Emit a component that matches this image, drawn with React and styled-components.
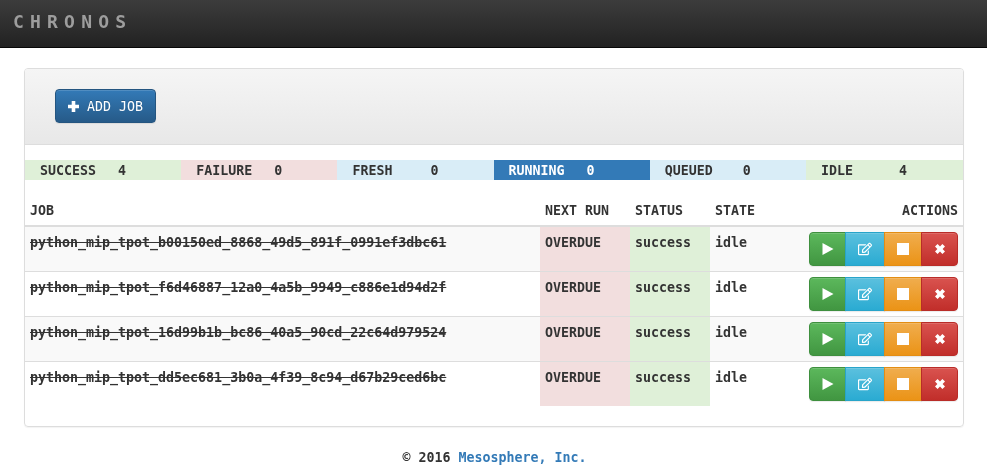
import React from "react";
import styled, { createGlobalStyle } from "styled-components";
import { FaRegEdit } from "react-icons/fa";

const Global = createGlobalStyle`
  html, body { margin: 0; padding: 0; background: #fff; }
  body { font-family: "DejaVu Sans Mono", monospace; font-size: 13.3px; line-height: 20px; color: #333; font-weight: 700; }
  #root { will-change: transform; }
  * { box-sizing: border-box; }
`;

const Navbar = styled.header`
  height: 48px;
  background: linear-gradient(to bottom, #3c3c3c 0%, #222 100%);
  border-bottom: 1px solid #080808;
  display: flex;
  align-items: center;
  padding: 0 0 3px 13px;
`;
const Brand = styled.div`
  font-size: 18px;
  letter-spacing: 6.2px;
  color: #9d9d9d;
  font-weight: 700;
`;
const Panel = styled.main`
  margin: 20px 23px 0 24px;
  height: 359px;
  border: 1px solid #ddd;
  border-radius: 4px;
  overflow: hidden;
  box-shadow: 0 1px 1px rgba(0, 0, 0, 0.05);
`;
const PanelHead = styled.div`
  height: 76px;
  padding: 20px 30px;
  background: linear-gradient(to bottom, #f5f5f5 0%, #e8e8e8 100%);
  border-bottom: 1px solid #ddd;
`;
const AddButton = styled.button`
  display: inline-flex;
  align-items: center;
  gap: 8px;
  height: 34px;
  width: 101px;
  padding: 0 0 0 12px;
  font: 400 13.3px "DejaVu Sans Mono", monospace;
  color: #fff;
  border: 1px solid #245580;
  border-radius: 4px;
  background: linear-gradient(to bottom, #337ab7 0%, #265a88 100%);
  text-shadow: 0 -1px 0 rgba(0, 0, 0, 0.2);
  box-shadow: inset 0 1px 0 rgba(255, 255, 255, 0.15), 0 1px 1px rgba(0, 0, 0, 0.075);
`;
const Counters = styled.div`
  display: grid;
  grid-template-columns: repeat(5, 156.2px) 1fr;
  margin-top: 15px;
`;
const Counter = styled.div`
  display: flex;
  height: 20px;
  padding: 1px 0 0 15px;
  background: ${(p) => p.$bg};
  color: ${(p) => p.$fg || "#333"};
`;
const CounterLabel = styled.span`
  width: 78px;
`;
const Table = styled.table`
  width: 100%;
  margin-top: 15px;
  border-collapse: collapse;
  table-layout: fixed;
`;
const Th = styled.th`
  height: 31px;
  padding: 5px 5px 4px;
  text-align: ${(p) => p.$right ? "right" : "left"};
  width: ${(p) => p.$w};
  font-weight: 700;
  border-bottom: 2px solid #ddd;
  vertical-align: bottom;
`;
const Tr = styled.tr`
  background: ${(p) => p.$odd ? "#f9f9f9" : "#fff"};
  &:last-child td { height: 44.5px; }
`;
const Td = styled.td`
  height: 45px;
  padding: 6px 5px 4px;
  vertical-align: top;
  border-top: 1px solid #ddd;
  background: ${(p) => p.$bg || "transparent"};
  text-align: ${(p) => p.$right ? "right" : "left"};
`;
const JobName = styled.span`
  text-decoration: line-through;
  white-space: nowrap;
`;
const Group = styled.div`
  display: inline-flex;
  vertical-align: top;
  margin-top: -1px;
`;
const ActionButton = styled.button`
  width: ${(p) => p.$w}px;
  height: 34px;
  padding: 0;
  display: flex;
  align-items: center;
  justify-content: center;
  color: #fff;
  margin-left: ${(p) => p.$first ? 0 : -1}px;
  border: 1px solid ${(p) => p.$border};
  border-radius: ${(p) => p.$first ? "4px 0 0 4px" : p.$last ? "0 4px 4px 0" : "0"};
  background: linear-gradient(to bottom, ${(p) => p.$from} 0%, ${(p) => p.$to} 100%);
  box-shadow: inset 0 1px 0 rgba(255, 255, 255, 0.15), 0 1px 1px rgba(0, 0, 0, 0.075);
`;
const Footer = styled.footer`
  margin-top: 21px;
  text-align: center;
  padding-left: 2px;
`;
const FootLink = styled.a`
  color: #337ab7;
  text-decoration: none;
`;

const PlusIcon = () => (
  <svg width="11" height="11" viewBox="0 0 11 11" fill="currentColor"><path d="M3.7 0h3.6v3.7H11v3.6H7.3V11H3.7V7.3H0V3.7h3.7z" /></svg>
);
const PlayIcon = () => (
  <svg width="12" height="12" viewBox="0 0 12 12" fill="currentColor"><path d="M0.5 0L11.5 6 0.5 12z" /></svg>
);
const StopIcon = () => (
  <svg width="12" height="12" viewBox="0 0 12 12" fill="currentColor"><path d="M0 0h12v12H0z" /></svg>
);
const RemoveIcon = () => (
  <svg width="10" height="10" viewBox="0 0 10 10" fill="currentColor"><path d="M2.6 0L5 2.4 7.4 0 10 2.6 7.6 5 10 7.4 7.4 10 5 7.6 2.6 10 0 7.4 2.4 5 0 2.6z" /></svg>
);

const jobs = [
  "python_mip_tpot_b00150ed_8868_49d5_891f_0991ef3dbc61",
  "python_mip_tpot_f6d46887_12a0_4a5b_9949_c886e1d94d2f",
  "python_mip_tpot_16d99b1b_bc86_40a5_90cd_22c64d979524",
  "python_mip_tpot_dd5ec681_3b0a_4f39_8c94_d67b29ced6bc",
];
const counters = [
  ["SUCCESS", 4, "#dff0d8"],
  ["FAILURE", 0, "#f2dede"],
  ["FRESH", 0, "#d9edf7"],
  ["RUNNING", 0, "#337ab7", "#fff"],
  ["QUEUED", 0, "#d9edf7"],
  ["IDLE", 4, "#dff0d8"],
];

export default function App() {
  return (
    <>
      <Global />
      <Navbar><Brand>CHRONOS</Brand></Navbar>
      <Panel>
        <PanelHead>
          <AddButton><PlusIcon />ADD JOB</AddButton>
        </PanelHead>
        <Counters>
          {counters.map(([l, n, bg, fg]) => (
            <Counter key={l} $bg={bg} $fg={fg}><CounterLabel>{l}</CounterLabel><span>{n}</span></Counter>
          ))}
        </Counters>
        <Table>
          <thead>
            <tr>
              <Th $w="515px">JOB</Th>
              <Th $w="90px">NEXT RUN</Th>
              <Th $w="80px">STATUS</Th>
              <Th $w="60px">STATE</Th>
              <Th $right>ACTIONS</Th>
            </tr>
          </thead>
          <tbody>
            {jobs.map((j, i) => (
              <Tr key={j} $odd={i % 2 === 0}>
                <Td><JobName>{j}</JobName></Td>
                <Td $bg="#f2dede">OVERDUE</Td>
                <Td $bg="#dff0d8">success</Td>
                <Td>idle</Td>
                <Td $right>
                  <Group>
                    <ActionButton $first $w={37} $border="#3e8f3e" $from="#5cb85c" $to="#419641"><PlayIcon /></ActionButton>
                    <ActionButton $w={40} $border="#28a4c9" $from="#5bc0de" $to="#2aabd2"><FaRegEdit size={14} /></ActionButton>
                    <ActionButton $w={38} $border="#e38d13" $from="#f0ad4e" $to="#eb9316"><StopIcon /></ActionButton>
                    <ActionButton $last $w={37} $border="#b92c28" $from="#d9534f" $to="#c12e2a"><RemoveIcon /></ActionButton>
                  </Group>
                </Td>
              </Tr>
            ))}
          </tbody>
        </Table>
      </Panel>
      <Footer>© 2016 <FootLink href="#">Mesosphere, Inc.</FootLink></Footer>
    </>
  );
}
